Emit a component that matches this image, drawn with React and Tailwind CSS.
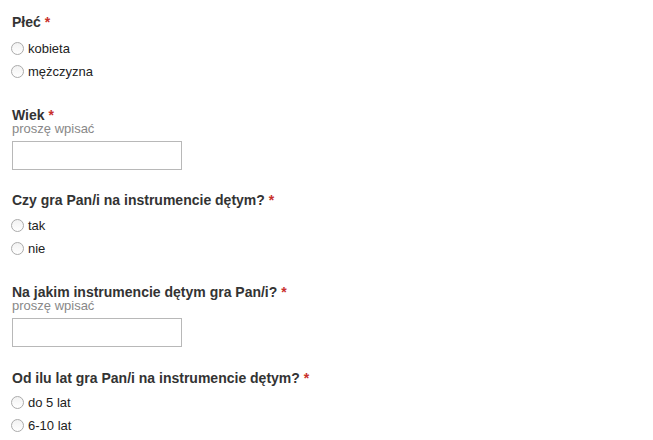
const sections = [
  { type: "radio", label: "Płeć", options: ["kobieta", "mężczyzna"], gap: "mt-[8px]" },
  { type: "text", label: "Wiek", space: "mb-[23px]" },
  { type: "radio", label: "Czy gra Pan/i na instrumencie dętym?", options: ["tak", "nie"], gap: "mt-[7px]" },
  { type: "text", label: "Na jakim instrumencie dętym gra Pan/i?", space: "mb-[24px]" },
  { type: "radio", label: "Od ilu lat gra Pan/i na instrumencie dętym?", options: ["do 5 lat", "6-10 lat"], gap: "mt-[6px]" },
];

function Title({ children }) {
  return (
    <div className="text-[14px] leading-[14px] font-bold text-[#333]">
      {children} <span className="text-[#c9302c]">*</span>
    </div>
  );
}

function RadioRow({ label }) {
  return (
    <label className="flex items-center h-[23px] gap-[4px] text-[13px] leading-[15px] text-[#222]">
      <span className="w-[13px] h-[13px] rounded-full border border-[#ababab] bg-gradient-to-b from-[#f2f2f2] to-white shrink-0" />
      <span>{label}</span>
    </label>
  );
}

export default function App() {
  return (
    <div
      className="w-[653px] h-[440px] overflow-hidden bg-white pt-[15px] pl-[11px]"
      style={{ fontFamily: '"Liberation Sans", Arial, sans-serif' }}
    >
      {sections.map((s, i) =>
        s.type === "radio" ? (
          <div key={i} className="mb-[25px]">
            <div className="pl-px">
              <Title>{s.label}</Title>
            </div>
            <div className={s.gap}>
              {s.options.map((o) => (
                <RadioRow key={o} label={o} />
              ))}
            </div>
          </div>
        ) : (
          <div key={i} className={`${s.space} pl-px`}>
            <Title>{s.label}</Title>
            <div className="text-[13px] leading-[13px] text-[#888]">proszę wpisać</div>
            <input
              type="text"
              className="block mt-[6px] w-[170px] h-[29px] border border-[#b8b8b8] bg-white outline-none"
            />
          </div>
        )
      )}
    </div>
  );
}
